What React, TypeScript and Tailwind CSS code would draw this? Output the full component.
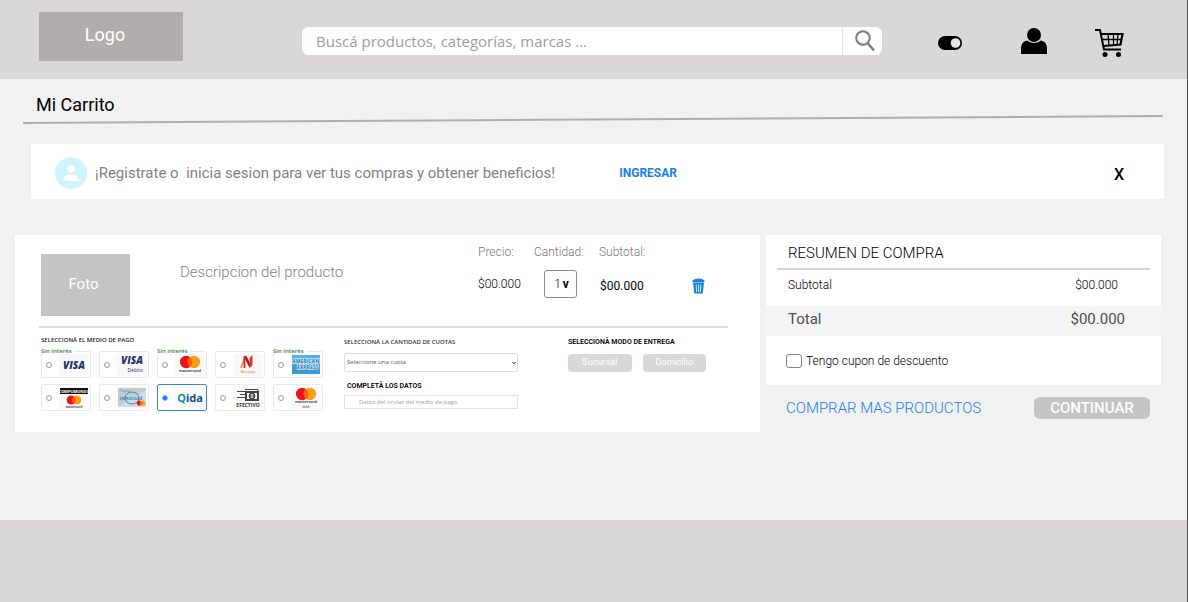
import React from "react";

const roboto = "font-['Roboto',sans-serif]";
const openSans = "font-['Open_Sans',sans-serif]";

function Mastercard({ cx, cy, r }: { cx: number; cy: number; r: number }) {
  const d = r * 0.62;
  const h = Math.sqrt(r * r - d * d);
  return (
    <g>
      <circle cx={cx - d} cy={cy} r={r} fill="#e9131e" />
      <circle cx={cx + d} cy={cy} r={r} fill="#f79e1b" />
      <path
        d={`M${cx} ${cy - h}A${r} ${r} 0 0 1 ${cx} ${cy + h}A${r} ${r} 0 0 1 ${cx} ${cy - h}Z`}
        fill="#ff5f00"
      />
    </g>
  );
}

const logoText = "'Open Sans', sans-serif";

function Visa({ debit = false }: { debit?: boolean }) {
  return (
    <g fontFamily={logoText} fill="#26316b">
      <text x="15" y={debit ? 10 : 15} fontSize="10" fontWeight="800" fontStyle="italic" textAnchor="middle">
        VISA
      </text>
      {debit && (
        <text x="26" y="18" fontSize="5" textAnchor="end">
          Débito
        </text>
      )}
    </g>
  );
}

function MastercardLogo({ debit = false }: { debit?: boolean }) {
  return (
    <g fontFamily={logoText} textAnchor="middle" fill="#222">
      <Mastercard cx={15} cy={debit ? 7 : 8} r={6.2} />
      <text x="15" y={debit ? 16 : 18} fontSize="4" fontWeight="600">
        mastercard
      </text>
      {debit && (
        <text x="15" y="21" fontSize="3">
          debit
        </text>
      )}
    </g>
  );
}

function Compumundo() {
  return (
    <g>
      <rect x="1" y="1" width="28" height="6" fill="#111" />
      <text x="15" y="6" fontSize="4" fontWeight="700" textAnchor="middle" fill="#fff" fontFamily={logoText}>
        COMPUMUNDO
      </text>
      <Mastercard cx={15} cy={13} r={4.5} />
      <text x="15" y="21" fontSize="3" fontWeight="600" textAnchor="middle" fill="#222" fontFamily={logoText}>
        mastercard
      </text>
    </g>
  );
}

function Cencosud() {
  return (
    <g>
      <rect x="1" y="1" width="28" height="19" fill="#c3ccd2" />
      <path d="M1 20 29 3V20Z" fill="#d5dade" />
      <text x="3" y="5" fontSize="3" fill="#3b86b5" fontFamily={logoText}>Tarjeta</text>
      <ellipse cx="15" cy="11" rx="7" ry="6" fill="none" stroke="#2b8fc6" strokeWidth="1" />
      <text x="14" y="13" fontSize="5" fontWeight="600" textAnchor="middle" fill="#1f80bb" fontFamily={logoText}>
        cencosud
      </text>
      <Mastercard cx={24} cy={16} r={2.6} />
    </g>
  );
}

function Naranja() {
  return (
    <g>
      <path d="M8 14 12 3" stroke="#f58a3c" strokeWidth="1.800" />
      <path d="M12 2 17.500 13" stroke="#9c1c2a" strokeWidth="2.600" />
      <path d="M16.500 14V4L19.500 1V11Z" fill="#e8391f" />
      <path d="M11.500 2V14" stroke="#d8242a" strokeWidth="1.800" />
      <text x="15" y="19" fontSize="4" textAnchor="middle" fill="#ef5a28" fontFamily={logoText}>
        Naranja
      </text>
    </g>
  );
}

function Amex() {
  return (
    <g>
      <rect x="1" y="1" width="28" height="19" fill="#3d9bd0" />
      <path d="M1 1H29V6Q15 4 1 12Z" fill="#5cb2de" />
      <g fontFamily={logoText} fontWeight="800" fontSize="5" fill="#2a8bc5" stroke="#fff" strokeWidth="1" paintOrder="stroke">
        <text x="1" y="9">AMERICAN</text>
        <text x="6" y="15">EXPRESS</text>
      </g>
    </g>
  );
}

function Qida() {
  return (
    <g fontFamily="'Noto Sans', sans-serif" fontWeight="700" fontSize="11">
      <text x="15" y="15" textAnchor="middle">
        <tspan fill="#1c86c4">Q</tspan>
        <tspan fill="#174f86">ida</tspan>
      </text>
    </g>
  );
}

function Efectivo() {
  return (
    <g stroke="#444" fill="none" strokeWidth="1">
      <path d="M4 4.500H14M7 7.500H13M4 10.500H13" />
      <path d="M12 2.500H25V5" />
      <rect x="13" y="5" width="12" height="8" fill="#fff" strokeWidth="2" />
      <ellipse cx="19" cy="9" rx="3" ry="3" fill="#666" />
      <path d="M19 7V11" stroke="#fff" />
      <text x="15" y="20" fontSize="5" fontWeight="700" fill="#333" stroke="none" textAnchor="middle" fontFamily={logoText}>
        EFECTIVO
      </text>
    </g>
  );
}

const methods = [
  { id: "visa", name: "Visa", noInterest: true, logo: <Visa /> },
  { id: "visa-debito", name: "Visa Débito", logo: <Visa debit /> },
  { id: "mastercard", name: "Mastercard", noInterest: true, logo: <MastercardLogo /> },
  { id: "naranja", name: "Naranja", logo: <Naranja /> },
  { id: "amex", name: "American Express", noInterest: true, logo: <Amex /> },
  { id: "compumundo", name: "Compumundo", logo: <Compumundo /> },
  { id: "cencosud", name: "Cencosud", logo: <Cencosud /> },
  { id: "qida", name: "Qida", logo: <Qida /> },
  { id: "efectivo", name: "Efectivo", logo: <Efectivo /> },
  { id: "mastercard-debit", name: "Mastercard Debit", logo: <MastercardLogo debit /> },
];

function Header() {
  return (
    <header className="flex h-[79px] items-start bg-[#d9d7d8] pl-[39px] pr-[63px] pt-3">
      <a href="#" className="flex h-[49px] w-36 shrink-0 items-center justify-center bg-[#b1adad] pb-1 pr-3 text-lg text-white">
        Logo
      </a>
      <form className="ml-[119px] mt-[15px] flex h-7 flex-1 overflow-hidden rounded-md bg-white" onSubmit={(e) => e.preventDefault()}>
        <input
          type="search"
          aria-label="Buscar"
          placeholder="Buscá productos, categorías, marcas ..."
          className={`min-w-0 flex-1 px-3.5 text-[15px] text-gray-700 outline-none placeholder:text-[#9d9d9d] ${openSans}`}
        />
        <button type="submit" aria-label="Buscar" className="flex w-10 items-center justify-center border-l border-[#e3e3e3] pl-1">
          <svg width="20" height="22" viewBox="0 0 20 22" fill="none" stroke="#7b7b7b">
            <circle cx="8" cy="8" r="6.8" strokeWidth="2" />
            <path d="M12.500 13 19 20.500" strokeWidth="2.500" />
          </svg>
        </button>
      </form>
      <button type="button" aria-label="Cambiar tema" className="ml-14 mt-6">
        <svg width="24" height="14" viewBox="0 0 24 14">
          <rect width="24" height="14" rx="7" />
          <circle cx="17.500" cy="7" r="4.800" fill="#e4e2e3" />
        </svg>
      </button>
      <a href="#" aria-label="Mi cuenta" className="ml-[59px] mt-4">
        <svg width="26" height="26" viewBox="0 0 26 26">
          <circle cx="13" cy="7" r="7" />
          <path d="M0 26V21C0 16 2 13.500 6 12.500Q13 17.500 20 12.500C24 13.500 26 16 26 21V26Z" />
        </svg>
      </a>
      <a href="#" aria-label="Carrito" className="ml-12 mt-4">
        <svg width="29" height="29" viewBox="0 0 29 29" fill="none" stroke="#000">
          <path d="M0 2H5L9 21.500H26" strokeWidth="2" />
          <path d="M6 6H27.500L25.500 16.500 8.500 18" strokeWidth="2.200" />
          <path d="M7.500 11.500H26M13 6 14 18M18.500 6V18M23 6 22 17.500" strokeWidth="1.300" />
          <circle cx="10" cy="26.500" r="2.500" fill="#000" stroke="none" />
          <circle cx="23.500" cy="26.500" r="2.500" fill="#000" stroke="none" />
        </svg>
      </a>
    </header>
  );
}

function Banner() {
  return (
    <section className="ml-[31px] mr-[23px] mt-5 flex h-[55px] items-center bg-white pl-6 pr-10">
      <svg width="32" height="32" viewBox="0 0 32 32" className="mt-0.5 shrink-0">
        <circle cx="16" cy="16" r="16" fill="#d0f4fc" />
        <circle cx="16" cy="12" r="4" fill="#fff" />
        <path d="M8.500 24C8.500 19.500 11 17.500 16 17.500S23.500 19.500 23.500 24Z" fill="#fff" />
      </svg>
      <p className="ml-2 mt-1 whitespace-pre text-[15px] text-[#828282]">
        ¡Registrate o{"  "}inicia sesion para ver tus compras y obtener beneficios!
      </p>
      <a href="#" className="ml-16 mt-0.5 text-xs font-bold text-[#1b7fe4]">INGRESAR</a>
      <button type="button" aria-label="Cerrar" className="ml-auto mt-1.5 text-base font-medium leading-5">X</button>
    </section>
  );
}

function PaymentMethods() {
  return (
    <fieldset className="w-[282px] shrink-0">
      <legend className={`mb-[7px] text-[6px] font-semibold leading-2 text-[#222] ${openSans}`}>
        SELECCIONÁ EL MEDIO DE PAGO
      </legend>
      <div className="grid grid-cols-5 gap-x-2 gap-y-1.5">
        {methods.map((m) => (
          <label
            key={m.id}
            className="relative flex h-[27px] items-center rounded-[2px] border border-[#e9e9e9] pl-1 has-checked:border-[#3b82d6]"
          >
            {m.noInterest && (
              <span className={`absolute -left-px -top-1 bg-white pr-0.5 text-[6px] font-semibold leading-[6px] text-[#3f7a3f] ${openSans}`}>
                Sin interés
              </span>
            )}
            <input
              type="radio"
              name="medio"
              aria-label={m.name}
              defaultChecked={m.id === "qida"}
              className="size-1.5 shrink-0 appearance-none rounded-full border border-[#9a9a9a] checked:border-[#8fbcf8] checked:bg-[#1a6ff0]"
            />
            <svg width="30" height="22" viewBox="0 0 30 22" className="ml-[7px] shrink-0 bg-[#f8f8f8]">
              {m.logo}
            </svg>
          </label>
        ))}
      </div>
    </fieldset>
  );
}

function Product() {
  return (
    <section className="h-[197px] min-w-0 bg-white pt-[9px]">
      <div className="flex pl-[26px] pr-[55px]">
        <div className="mt-2.5 flex h-[62px] w-[89px] shrink-0 items-center justify-center bg-[#c4c4c4] pb-0.5 pr-1 text-[15px] text-white">
          Foto
        </div>
        <h2 className="ml-[50px] mt-[18px] flex-1 text-[15px] font-light leading-5 text-[#828282]">Descripcion del producto</h2>
        <dl className="flex text-xs leading-4">
          <div className="w-14">
            <dt className="font-light text-[#777]">Precio:</dt>
            <dd className="mt-4 font-light text-black">$00.000</dd>
          </div>
          <div className="w-[65px]">
            <dt className="font-light text-[#777]">Cantidad:</dt>
            <dd className="ml-2.5 mt-2.5">
              <button type="button" aria-label="Cantidad" className="flex h-7 w-[33px] items-center justify-center gap-0.5 rounded-[3px] border border-[#8a8a8a] pl-0.5">
                <span className="font-light">1</span>
                <span className="font-bold">v</span>
              </button>
            </dd>
          </div>
          <div className="w-[93px]">
            <dt className="font-light text-[#777]">Subtotal:</dt>
            <dd className="ml-px mt-[18px] text-black">$00.000</dd>
          </div>
        </dl>
        <button type="button" aria-label="Eliminar" className="mt-[34px] self-start">
          <svg width="13" height="16" viewBox="0 0 14 16" preserveAspectRatio="none">
            <path d="M.5 2.500Q3 .5 7 .5T13.500 2.500V4H.5Z" fill="#1b7fe4" />
            <path d="M1 4.500H13L11.500 15.500H2.500Z" fill="#1b7fe4" />
            <path d="M4.500 6.500 5 14M7 6.500V14M9.500 6.500 9 14" stroke="#fff" strokeWidth=".8" />
          </svg>
        </button>
      </div>
      <hr className="ml-6 mr-8 mt-2.5 border-t-2 border-[#dcdcdc]" />
      <div className="flex pl-[26px] pr-[54px] pt-2">
        <PaymentMethods />
        <div className="ml-[21px] w-[174px] pt-0.5">
          <label htmlFor="cuotas" className={`block text-[6px] font-semibold leading-2 text-[#333] ${openSans}`}>
            SELECCIONÁ LA CANTIDAD DE CUOTAS
          </label>
          <div className="relative mt-[7px]">
            <select
              id="cuotas"
              className={`block h-[19px] w-full appearance-none rounded-[2px] border border-[#dedede] px-0.5 text-[6px] text-[#555] ${openSans}`}
            >
              <option>Seleccione una cuota</option>
            </select>
            <svg width="4" height="4" viewBox="0 0 4 4" className="pointer-events-none absolute right-0.5 top-2" fill="none" stroke="#333">
              <path d="M.3 1 2 2.800 3.700 1" />
            </svg>
          </div>
          <label htmlFor="titular" className="ml-[3px] mt-2.5 block text-[7px] font-semibold leading-2 text-black">
            COMPLETÀ LOS DATOS
          </label>
          <input
            id="titular"
            placeholder="Datos del tirular del medio de pago"
            className={`mt-[5px] block h-3.5 w-full border border-[#e2e2e2] px-3.5 text-[6px] placeholder:text-[#a0a0a0] ${openSans}`}
          />
        </div>
        <div className="ml-auto w-[138px] pt-0.5">
          <h3 className="text-[7px] font-semibold leading-2 text-black">SELECCIONÀ MODO DE ENTREGA</h3>
          <div className="mt-2 flex gap-[11px] text-[9px] text-white">
            <button type="button" className="h-[18px] flex-1 rounded-[4px] bg-[#d9d7d8]">Sucursal</button>
            <button type="button" className="h-[18px] flex-1 rounded-[4px] bg-[#d9d7d8]">Domicilio</button>
          </div>
        </div>
      </div>
    </section>
  );
}

function Summary() {
  return (
    <aside className="min-w-0">
      <div className="h-[150px] bg-white pt-2">
        <h2 className="pl-[22px] text-[15px] font-light leading-5 text-black">RESUMEN DE COMPRA</h2>
        <hr className="ml-[11px] mr-[11px] mt-[5px] border-t-2 border-[#d5d5d5]" />
        <div className="flex h-9 justify-between pl-[22px] pr-[43px] pt-[7px] text-xs font-light leading-4 text-black">
          <span>Subtotal</span>
          <span>$00.000</span>
        </div>
        <div className="flex h-[30px] justify-between bg-[#f4f4f4] pl-[22px] pr-9 text-[15px] leading-[26px] text-[#4f4f4f]">
          <span>Total</span>
          <span>$00.000</span>
        </div>
        <label className="ml-5 mt-4 flex items-center gap-1 text-xs font-light leading-[18px] text-black">
          <input type="checkbox" className="h-3.5 w-4 appearance-none rounded-[3px] border border-[#828282] bg-white checked:bg-[#1b7fe4]" />
          Tengo cupon de descuento
        </label>
      </div>
      <div className="flex items-center justify-between pl-5 pr-[11px] pt-3">
        <a href="#" className="text-[15px] font-light leading-5 text-[#1b7fe4]">COMPRAR MAS PRODUCTOS</a>
        <button type="button" className="h-[22px] w-[116px] rounded-md bg-[#c4c4c4] text-[15px] font-medium leading-5 text-white">CONTINUAR</button>
      </div>
    </aside>
  );
}

export default function App() {
  return (
    <div className={`flex min-h-screen flex-col border-r border-[#4a4a4a] bg-[#f1f1f1] ${roboto}`}>
      <Header />
      <main className="flex-1">
        <h1 className="pl-9 pt-3.5 text-lg leading-6 text-black">Mi Carrito</h1>
        <div className="pl-[23px] pr-6">
          <svg viewBox="0 0 1140 9" preserveAspectRatio="none" className="-mt-0.5 block h-[9px] w-full">
            <path d="M0 8 1140 1" stroke="#b1adad" strokeWidth="2" vectorEffect="non-scaling-stroke" />
          </svg>
        </div>
        <Banner />
        <div className="mt-9 grid grid-cols-[745fr_395fr] gap-1.5 pb-[88px] pl-[15px] pr-[26px]">
          <Product />
          <Summary />
        </div>
      </main>
      <footer className="h-[82px] bg-[#d9d7d8]" />
    </div>
  );
}
